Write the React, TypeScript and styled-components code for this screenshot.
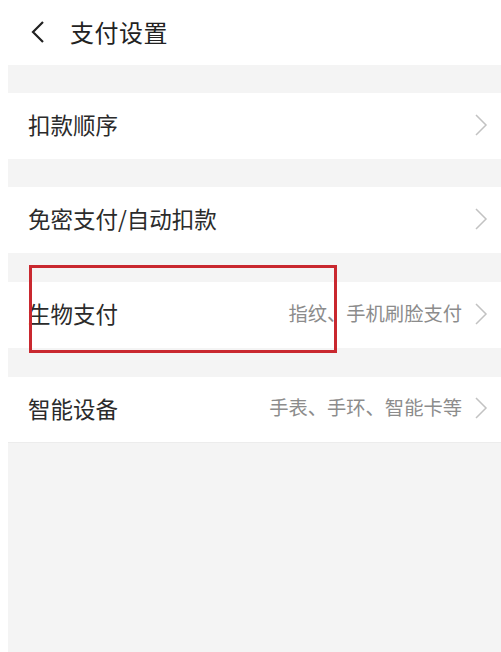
import React from "react";
import styled, { createGlobalStyle } from "styled-components";

const GlobalStyle = createGlobalStyle`
	html, body {
		margin: 0;
		padding: 0;
		background: #ffffff;
	}
	body {
		font-family: "Noto Sans CJK SC", "Noto Sans", sans-serif;
	}
`;

//Page
const Page = styled.div`
	display: flex;
	flex-direction: column;
	width: 501px;
	height: 652px;
	background-color: #ffffff;
	overflow: hidden;
`;

const Header = styled.div`
	display: flex;
	align-items: center;
	height: 65px;
	padding-left: 30px;
	padding-bottom: 2px;
	box-sizing: border-box;
`;

const BackButton = styled.div`
	display: flex;
	align-items: center;
	width: 40px;
	height: 30px;
`;

const Title = styled.div`
	font-size: 24px;
	color: #222222;
	letter-spacing: 0.5px;
	line-height: 1;
`;

//Grey strips between groups
const Spacer = styled.div<{ $h: number }>`
	height: ${(p) => p.$h}px;
	margin-left: 8px;
	background-color: #f4f4f4;
`;

const Filler = styled.div`
	flex: 1;
	margin-left: 8px;
	background-color: #f4f4f4;
	border-top: 1px solid #ececec;
`;

const Row = styled.div<{ $h: number }>`
	position: relative;
	display: flex;
	align-items: center;
	height: ${(p) => p.$h}px;
	padding: 0 13px 3px 28px;
	box-sizing: border-box;
	background-color: #ffffff;
`;

const Label = styled.div`
	flex: 1;
	font-size: 22.5px;
	color: #2b2b2b;
	line-height: 1;
`;

const Hint = styled.div`
	font-size: 19.3px;
	color: #8c8c8c;
	line-height: 1;
	margin-right: 12px;
`;

const Marker = styled.div`
	position: absolute;
	left: 29px;
	top: -17px;
	width: 308px;
	height: 88px;
	border: 3px solid #c9282f;
	box-sizing: border-box;
	pointer-events: none;
`;

function Chevron() {
	return (
		<svg width="14" height="22" viewBox="0 0 14 22">
			<path d="M2 1 L12 11 L2 21" fill="none" stroke="#c2c2c2" strokeWidth="1.5" />
		</svg>
	);
}

function BackIcon() {
	return (
		<svg width="16" height="22" viewBox="0 0 16 22">
			<path d="M13 1 L3 11 L13 21" fill="none" stroke="#222" strokeWidth="2.2" />
		</svg>
	);
}

export default function App() {
	return (
		<>
			<GlobalStyle />
			<Page>
				<Header>
					<BackButton>
						<BackIcon />
					</BackButton>
					<Title>支付设置</Title>
				</Header>

				<Spacer $h={28} />
				<Row $h={66}>
					<Label>扣款顺序</Label>
					<Chevron />
				</Row>

				<Spacer $h={28} />
				<Row $h={66}>
					<Label>免密支付/自动扣款</Label>
					<Chevron />
				</Row>

				<Spacer $h={29} />
				<Row $h={66}>
					<Label>生物支付</Label>
					<Hint>指纹、手机刷脸支付</Hint>
					<Chevron />
					<Marker />
				</Row>

				<Spacer $h={29} />
				<Row $h={65}>
					<Label>智能设备</Label>
					<Hint>手表、手环、智能卡等</Hint>
					<Chevron />
				</Row>

				<Filler />
			</Page>
		</>
	);
}
